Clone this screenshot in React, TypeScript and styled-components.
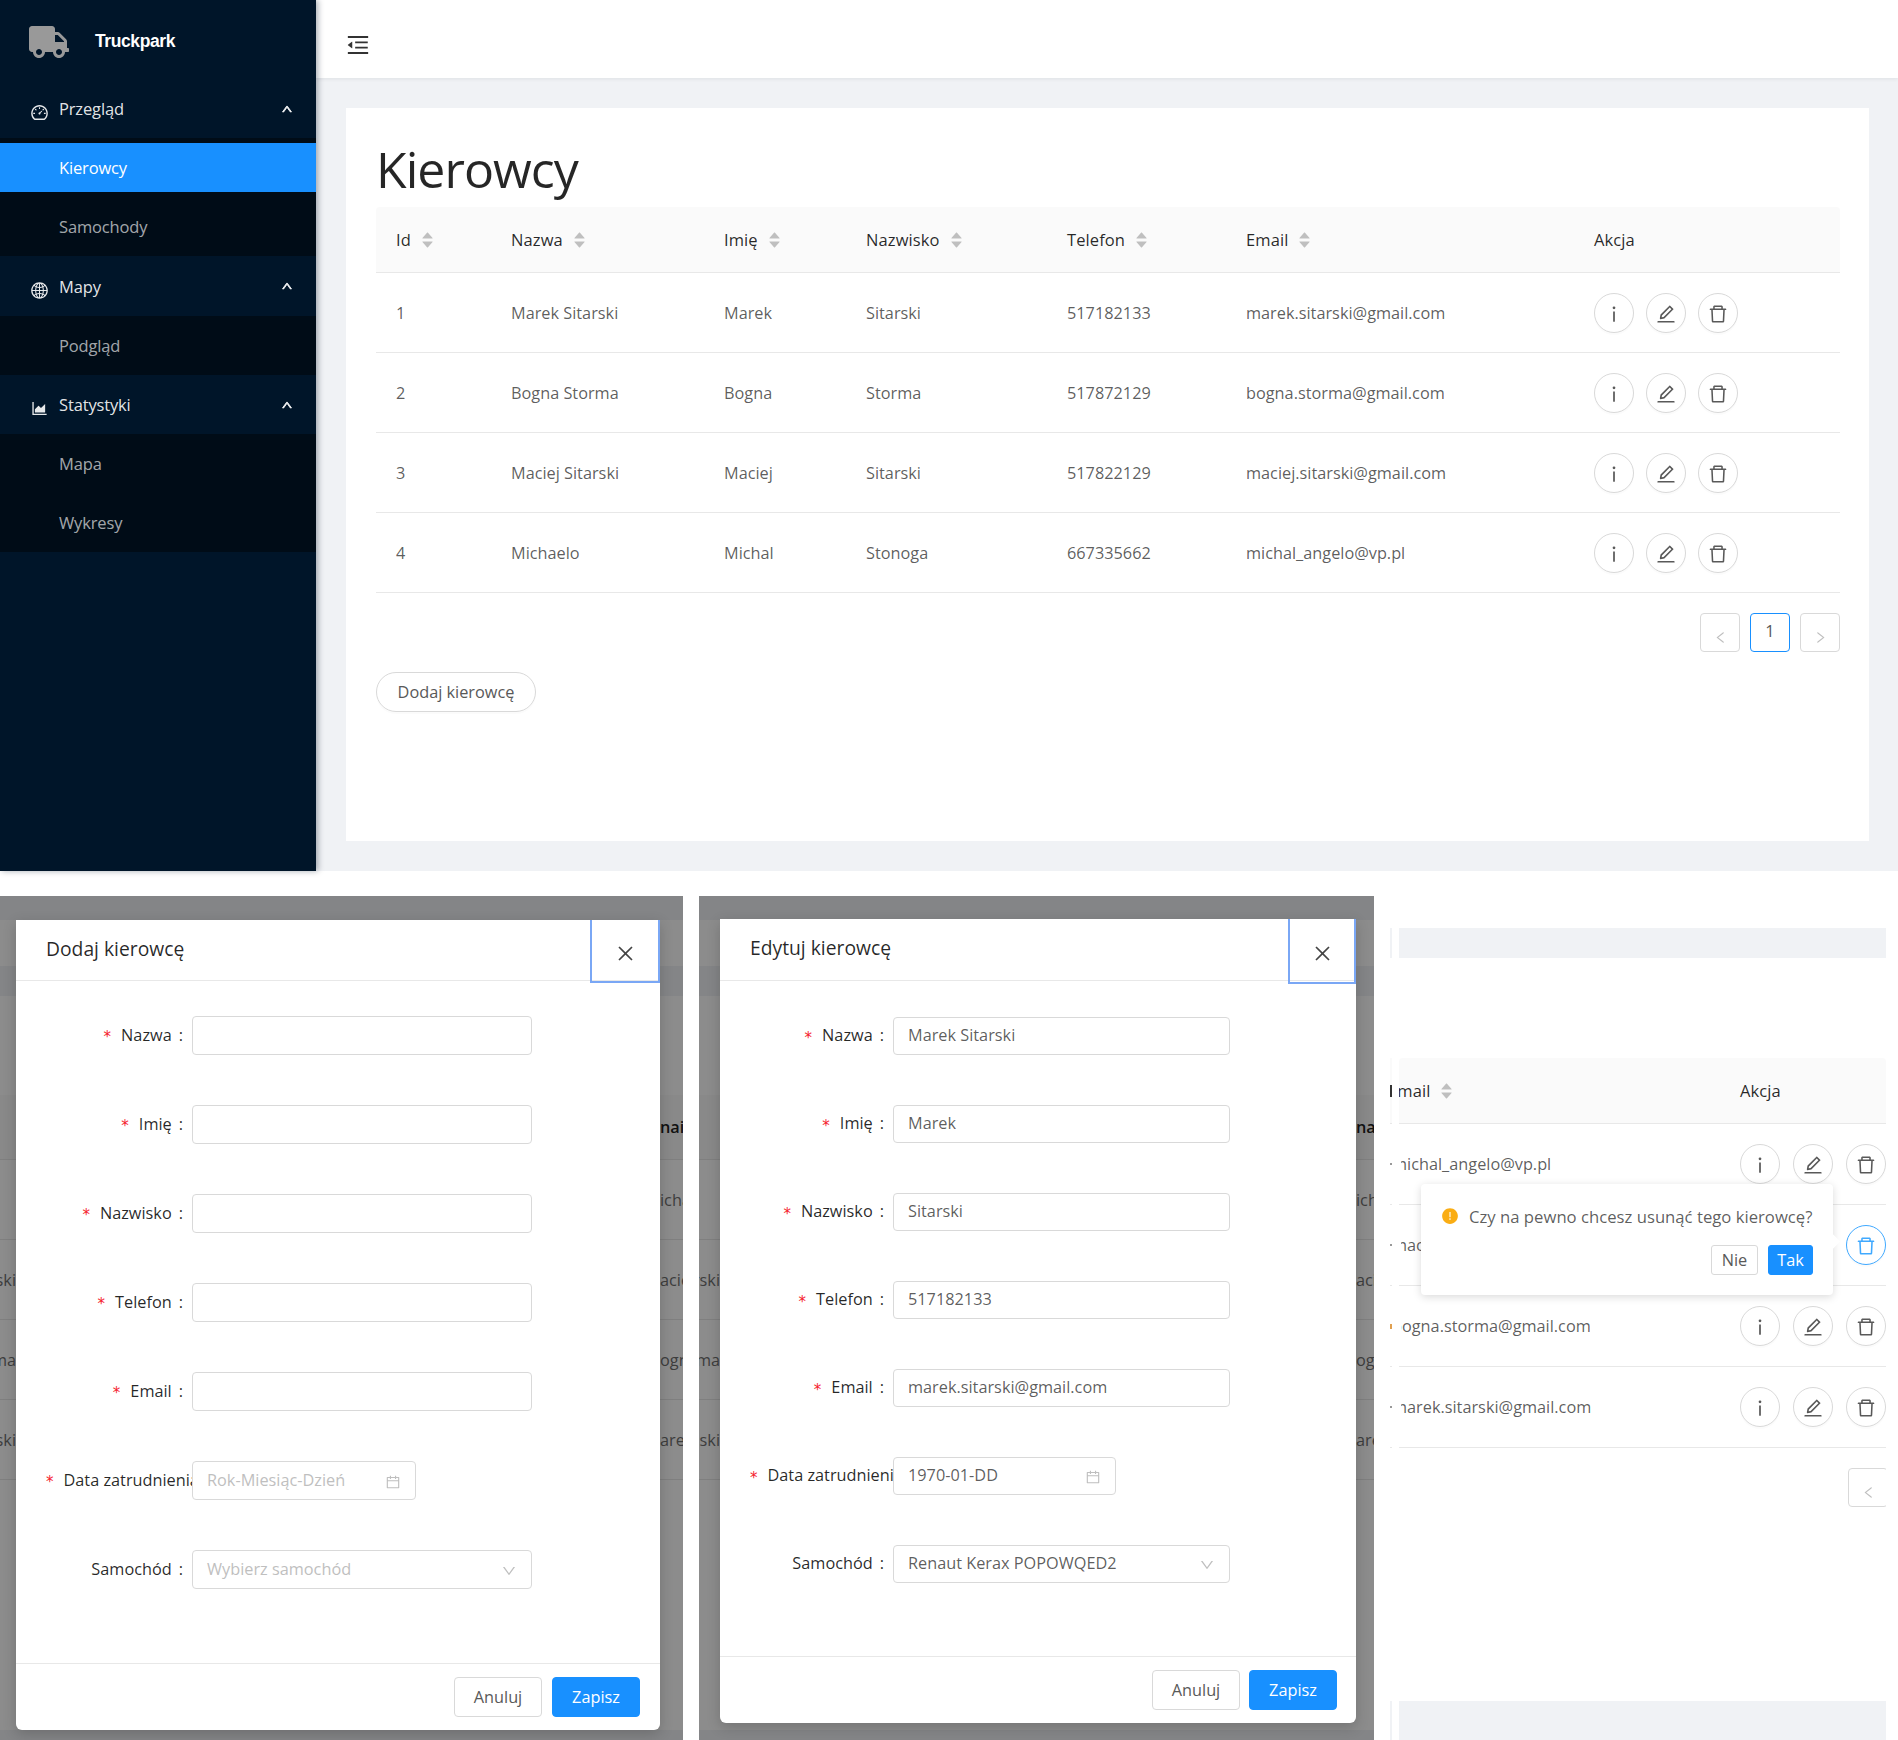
import React from 'react';
import styled, { createGlobalStyle } from 'styled-components';
import { FaTruck } from 'react-icons/fa';
import {
  AiFillCaretDown,
  AiFillCaretUp,
  AiFillExclamationCircle,
  AiOutlineAreaChart,
  AiOutlineCalendar,
  AiOutlineClose,
  AiOutlineDashboard,
  AiOutlineDelete,
  AiOutlineDown,
  AiOutlineEdit,
  AiOutlineGlobal,
  AiOutlineInfo,
  AiOutlineLeft,
  AiOutlineMenuFold,
  AiOutlineRight,
  AiOutlineUp,
} from 'react-icons/ai';

const FONT = '"Open Sans", "Noto Sans", sans-serif';

const GlobalStyle = createGlobalStyle`
  html, body {
    margin: 0;
    padding: 0;
    background: #fff;
    font-family: ${FONT};
  }
  * {
    box-sizing: border-box;
  }
`;

const Page = styled.div`
  width: 1898px;
  height: 1740px;
  display: flex;
  flex-direction: column;
  gap: 25px;
  overflow: hidden;
  background: #fff;
  font-size: 16.3px;
  color: rgba(0, 0, 0, 0.65);
`;

/* ---------- dashboard ---------- */

const Dashboard = styled.div`
  height: 871px;
  display: flex;
`;

const Sidebar = styled.aside`
  width: 316px;
  background: #001529;
  color: #fff;
  box-shadow: 2px 0 6px rgba(0, 21, 41, 0.35);
  position: relative;
`;

const Logo = styled.div`
  height: 79px;
  display: flex;
  align-items: center;
  padding: 4px 0 0 29px;
  gap: 26px;
  font-family: "Liberation Sans", sans-serif;
  font-size: 17.5px;
  font-weight: 700;
  letter-spacing: -0.4px;
  svg {
    width: 40px;
    height: 34px;
    color: #999;
  }
`;

const MenuHead = styled.div<{ $h: number }>`
  height: ${(p) => p.$h}px;
  display: flex;
  align-items: center;
  padding: 0 23px 0 30px;
  font-size: 16.5px;
  letter-spacing: -0.15px;
  color: rgba(255, 255, 255, 0.9);
`;

const MenuIcon = styled.span`
  width: 29px;
  display: flex;
  margin-top: 8px;
  svg {
    width: 19px;
    height: 19px;
  }
`;

const MenuChevron = styled.span`
  margin-left: auto;
  display: flex;
  svg {
    width: 12px;
    height: 12px;
    stroke: currentColor;
    stroke-width: 80;
  }
`;

const SubMenu = styled.div`
  background: #000c17;
  padding: 5px 0;
  display: flex;
  flex-direction: column;
  gap: 10px;
`;

const SubItem = styled.div<{ $active?: boolean }>`
  height: 49px;
  display: flex;
  align-items: center;
  padding-left: 59px;
  font-size: 16.5px;
  letter-spacing: -0.15px;
  background: ${(p) => (p.$active ? '#1890ff' : 'transparent')};
  color: ${(p) => (p.$active ? '#fff' : 'rgba(255, 255, 255, 0.65)')};
`;

const Main = styled.div`
  flex: 1;
  display: flex;
  flex-direction: column;
  background: #f0f2f5;
`;

const TopBar = styled.header`
  height: 78px;
  background: #fff;
  display: flex;
  align-items: center;
  padding: 12px 0 0 29px;
  box-shadow: 0 1px 4px rgba(0, 21, 41, 0.08);
  svg {
    width: 26px;
    height: 26px;
    color: #333;
  }
`;

const Card = styled.section`
  margin: 30px 29px 30px 30px;
  flex: 1;
  background: #fff;
  padding: 30px 29px 0 30px;
`;

const Title = styled.h1`
  margin: 0;
  height: 69px;
  font-size: 50px;
  line-height: 63px;
  font-weight: 400;
  letter-spacing: -0.95px;
  color: rgba(0, 0, 0, 0.85);
`;

const MAIN_COLUMNS = '115px 213px 142px 201px 179px 348px 266px';
const CLIPPED_COLUMNS = '341px 146px';

const HeadRow = styled.div<{ $columns: string; $h: number }>`
  height: ${(p) => p.$h}px;
  display: grid;
  grid-template-columns: ${(p) => p.$columns};
  align-items: center;
  background: #fafafa;
  border-bottom: 1px solid #e8e8e8;
  border-radius: 4px 4px 0 0;
  font-weight: 500;
  font-size: 16.5px;
  letter-spacing: 0.1px;
  color: rgba(0, 0, 0, 0.85);
`;

const BodyRow = styled.div<{ $columns: string; $h: number }>`
  height: ${(p) => p.$h}px;
  display: grid;
  grid-template-columns: ${(p) => p.$columns};
  align-items: center;
  border-bottom: 1px solid #e8e8e8;
`;

const Cell = styled.div`
  padding-left: 20px;
  white-space: nowrap;
  overflow: hidden;
`;

const HeadCell = styled.div<{ $flush?: boolean }>`
  padding-left: ${(p) => (p.$flush ? 0 : 20)}px;
  display: flex;
  align-items: center;
  gap: 9px;
`;

const ClippedCell = styled.div`
  overflow: hidden;
  white-space: nowrap;
  text-indent: -7px;
  clip-path: inset(0 0 0 2px);
`;

const ClippedHead = styled(HeadCell)`
  margin-left: -11px;
  clip-path: inset(0 0 0 11px);
`;

const SortWrap = styled.span`
  display: inline-flex;
  flex-direction: column;
  color: #bfbfbf;
  svg {
    width: 15px;
    height: 15px;
    margin: -3px 0;
    display: block;
  }
`;

const Sort = () => (
  <SortWrap>
    <AiFillCaretUp />
    <AiFillCaretDown />
  </SortWrap>
);

const ActionGroup = styled.div<{ $flush?: boolean; $gap: number }>`
  padding-left: ${(p) => (p.$flush ? 0 : 20)}px;
  display: flex;
  gap: ${(p) => p.$gap}px;
`;

const CircleButton = styled.span<{ $active?: boolean }>`
  width: 40px;
  height: 40px;
  border-radius: 50%;
  border: 1px solid ${(p) => (p.$active ? '#40a9ff' : '#d9d9d9')};
  color: ${(p) => (p.$active ? '#40a9ff' : '#595959')};
  background: #fff;
  box-shadow: 0 2px 0 rgba(0, 0, 0, 0.015);
  display: flex;
  align-items: center;
  justify-content: center;
  flex: none;
  svg {
    width: 22px;
    height: 22px;
    margin-top: 2px;
  }
`;

const Actions = ({ active, flush }: { active?: boolean; flush?: boolean }) => (
  <ActionGroup $flush={flush} $gap={flush ? 13 : 12}>
    <CircleButton>
      <AiOutlineInfo />
    </CircleButton>
    <CircleButton>
      <AiOutlineEdit />
    </CircleButton>
    <CircleButton $active={active}>
      <AiOutlineDelete />
    </CircleButton>
  </ActionGroup>
);

const Pager = styled.div<{ $flush?: boolean }>`
  display: flex;
  justify-content: flex-end;
  gap: 10px;
  padding-top: 20px;
  margin-right: ${(p) => (p.$flush ? '-2px' : '0')};
`;

const PageButton = styled.span<{ $active?: boolean }>`
  width: 40px;
  height: 39px;
  border: 1px solid ${(p) => (p.$active ? '#1890ff' : '#d9d9d9')};
  border-radius: 4px;
  display: flex;
  align-items: center;
  justify-content: center;
  padding-bottom: 3px;
  color: ${(p) => (p.$active ? '#595959' : '#bfbfbf')};
  font-size: 16.3px;
  svg {
    width: 15px;
    height: 15px;
    margin-top: 12px;
  }
`;

const AddButton = styled.span`
  margin-top: 20px;
  width: 160px;
  height: 40px;
  border: 1px solid #d9d9d9;
  border-radius: 20px;
  display: flex;
  align-items: center;
  justify-content: center;
  font-size: 16.3px;
  color: #595959;
  box-shadow: 0 2px 0 rgba(0, 0, 0, 0.015);
`;

const drivers = [
  { id: 1, name: 'Marek Sitarski', first: 'Marek', last: 'Sitarski', phone: '517182133', email: 'marek.sitarski@gmail.com' },
  { id: 2, name: 'Bogna Storma', first: 'Bogna', last: 'Storma', phone: '517872129', email: 'bogna.storma@gmail.com' },
  { id: 3, name: 'Maciej Sitarski', first: 'Maciej', last: 'Sitarski', phone: '517822129', email: 'maciej.sitarski@gmail.com' },
  { id: 4, name: 'Michaelo', first: 'Michal', last: 'Stonoga', phone: '667335662', email: 'michal_angelo@vp.pl' },
];

const sortable = ['Id', 'Nazwa', 'Imię', 'Nazwisko', 'Telefon', 'Email'];

/* ---------- dimmed page behind a dialog ---------- */

const Backdrop = styled.div<{ $w: number }>`
  position: relative;
  width: ${(p) => p.$w}px;
  flex: none;
  display: flex;
  flex-direction: column;
  overflow: hidden;
  background: #8c8c8c;
  font-size: 16.3px;
  color: #3d3d3d;
`;

const BackBand = styled.div<{ $h: number }>`
  height: ${(p) => p.$h}px;
  flex: none;
  background: #848587;
`;

const BackGap = styled.div<{ $h: number }>`
  height: ${(p) => p.$h}px;
  flex: none;
`;

const BackRow = styled.div<{ $head?: boolean }>`
  height: ${(p) => (p.$head ? 65 : 80)}px;
  flex: none;
  display: flex;
  justify-content: space-between;
  align-items: center;
  border-bottom: 1px solid #7f7f7f;
  background: ${(p) => (p.$head ? '#898989' : 'transparent')};
  color: ${(p) => (p.$head ? '#111' : '#3d3d3d')};
  font-weight: ${(p) => (p.$head ? 600 : 400)};
`;

const Fragment = styled.span<{ $w: number; $right?: boolean }>`
  width: ${(p) => p.$w}px;
  overflow: hidden;
  white-space: nowrap;
  display: flex;
  justify-content: ${(p) => (p.$right ? 'flex-start' : 'flex-end')};
`;

const Dialog = styled.div<{ $left: number; $top: number; $w: number; $h: number }>`
  position: absolute;
  left: ${(p) => p.$left}px;
  top: ${(p) => p.$top}px;
  width: ${(p) => p.$w}px;
  height: ${(p) => p.$h}px;
  background: #fff;
  border-radius: 0 0 6px 6px;
  box-shadow: 0 4px 14px rgba(0, 0, 0, 0.18);
  display: flex;
  flex-direction: column;
`;

const DialogHead = styled.div<{ $h: number }>`
  position: relative;
  height: ${(p) => p.$h}px;
  flex: none;
  display: flex;
  align-items: center;
  padding: 0 30px 4px;
  border-bottom: 1px solid #e8e8e8;
  font-size: 19.3px;
  font-weight: 500;
  color: rgba(0, 0, 0, 0.85);
`;

const CloseBox = styled.span<{ $w: number; $h: number }>`
  position: absolute;
  top: 0;
  right: 0;
  width: ${(p) => p.$w}px;
  height: ${(p) => p.$h}px;
  border: 2px solid #7aa7f5;
  border-top: none;
  display: flex;
  align-items: center;
  justify-content: center;
  color: #444;
  padding-top: 6px;
  svg {
    width: 21px;
    height: 21px;
  }
`;

const Form = styled.div<{ $pad: number }>`
  flex: 1;
  padding-top: ${(p) => p.$pad}px;
  display: flex;
  flex-direction: column;
  gap: 50px;
`;

const FormRow = styled.div<{ $h: number; $label: number }>`
  height: ${(p) => p.$h}px;
  display: grid;
  grid-template-columns: ${(p) => p.$label}px 1fr;
  align-items: center;
`;

const Label = styled.label<{ $long?: boolean; $pad: number }>`
  display: flex;
  align-items: center;
  justify-content: ${(p) => (p.$long ? 'flex-start' : 'flex-end')};
  padding-left: ${(p) => (p.$long ? p.$pad : 0)}px;
  padding-right: ${(p) => (p.$long ? 0 : 9)}px;
  padding-bottom: 2px;
  white-space: nowrap;
  overflow: hidden;
  color: rgba(0, 0, 0, 0.85);
  font-size: 16.3px;
`;

const Star = styled.span`
  color: #f5222d;
  margin-right: 10px;
  font-family: "DejaVu Sans", sans-serif;
  font-size: 15px;
  line-height: 1;
  transform: translateY(3px);
`;

const Colon = styled.span`
  margin-left: 7px;
`;

const Control = styled.div<{ $w: number; $h: number; $muted?: boolean }>`
  width: ${(p) => p.$w}px;
  height: ${(p) => p.$h}px;
  border: 1px solid #d9d9d9;
  border-radius: 4px;
  background: #fff;
  display: flex;
  align-items: center;
  padding: 0 14px 2px;
  font-size: 16.3px;
  color: ${(p) => (p.$muted ? '#bfbfbf' : 'rgba(0, 0, 0, 0.65)')};
  svg {
    margin-left: auto;
    width: 16px;
    height: 16px;
    margin-top: 4px;
    color: #bfbfbf;
    flex: none;
  }
`;

const DialogFoot = styled.div<{ $pad: number; $gap: number }>`
  flex: none;
  height: 67px;
  border-top: 1px solid #e8e8e8;
  display: flex;
  justify-content: flex-end;
  align-items: center;
  gap: ${(p) => p.$gap}px;
  padding-right: ${(p) => p.$pad}px;
`;

const FootButton = styled.span<{ $primary?: boolean }>`
  width: 88px;
  height: 40px;
  border-radius: 4px;
  border: 1px solid ${(p) => (p.$primary ? '#1890ff' : '#d9d9d9')};
  background: ${(p) => (p.$primary ? '#1890ff' : '#fff')};
  color: ${(p) => (p.$primary ? '#fff' : '#595959')};
  display: flex;
  align-items: center;
  justify-content: center;
  font-size: 16.3px;
`;

type Geometry = {
  left: number;
  top: number;
  w: number;
  h: number;
  head: number;
  closeW: number;
  closeH: number;
  pad: number;
  row: number;
  label: number;
  control: number;
  date: number;
  longPad: number;
  footPad: number;
  footGap: number;
};

const fields = ['Nazwa', 'Imię', 'Nazwisko', 'Telefon', 'Email'];

const DriverDialog = ({
  title,
  geo,
  values,
  date,
  car,
}: {
  title: string;
  geo: Geometry;
  values: string[];
  date: string;
  car: string;
}) => (
  <Dialog $left={geo.left} $top={geo.top} $w={geo.w} $h={geo.h}>
    <DialogHead $h={geo.head}>
      {title}
      <CloseBox $w={geo.closeW} $h={geo.closeH}>
        <AiOutlineClose />
      </CloseBox>
    </DialogHead>
    <Form $pad={geo.pad}>
      {fields.map((field, i) => (
        <FormRow key={field} $h={geo.row} $label={geo.label}>
          <Label $pad={0}>
            <Star>*</Star>
            {field}
            <Colon>:</Colon>
          </Label>
          <Control $w={geo.control} $h={geo.row}>
            {values[i]}
          </Control>
        </FormRow>
      ))}
      <FormRow $h={geo.row} $label={geo.label}>
        <Label $long $pad={geo.longPad}>
          <Star>*</Star>
          Data zatrudnienia
          <Colon>:</Colon>
        </Label>
        <Control $w={geo.date} $h={geo.row} $muted={date.startsWith('Rok')}>
          {date}
          <AiOutlineCalendar />
        </Control>
      </FormRow>
      <FormRow $h={geo.row} $label={geo.label}>
        <Label $pad={0}>
          Samochód
          <Colon>:</Colon>
        </Label>
        <Control $w={geo.control} $h={geo.row} $muted={car.startsWith('Wybierz')}>
          {car}
          <AiOutlineDown />
        </Control>
      </FormRow>
    </Form>
    <DialogFoot $pad={geo.footPad} $gap={geo.footGap}>
      <FootButton>Anuluj</FootButton>
      <FootButton $primary>Zapisz</FootButton>
    </DialogFoot>
  </Dialog>
);

const DimmedPage = ({
  w,
  leftW,
  rightW,
  left,
  right,
  children,
}: {
  w: number;
  leftW: number;
  rightW: number;
  left: string[];
  right: string[];
  children: React.ReactNode;
}) => (
  <Backdrop $w={w}>
    <BackBand $h={24} />
    <BackGap $h={46} />
    <BackBand $h={30} />
    <BackGap $h={99} />
    {right.map((text, i) => (
      <BackRow key={text} $head={i === 0}>
        <Fragment $w={leftW}>{left[i]}</Fragment>
        <Fragment $w={rightW} $right>
          {text}
        </Fragment>
      </BackRow>
    ))}
    <BackGap $h={250} />
    <BackBand $h={10} />
    {children}
  </Backdrop>
);

/* ---------- delete confirmation crop ---------- */

const ConfirmPanel = styled.div`
  display: flex;
  padding-top: 32px;
  gap: 7px;
`;

const Sliver = styled.div`
  width: 2px;
  display: flex;
  flex-direction: column;
`;

const SliverPart = styled.div<{ $h: number; $bg?: string; $line?: boolean }>`
  height: ${(p) => p.$h}px;
  flex: none;
  display: flex;
  align-items: center;
  background: ${(p) => p.$bg || 'transparent'};
  border-bottom: ${(p) => (p.$line ? '1px solid #e8e8e8' : 'none')};
`;

const SliverMark = styled.span<{ $h: number; $color: string }>`
  width: 2px;
  height: ${(p) => p.$h}px;
  background: ${(p) => p.$color};
`;

const CropColumn = styled.div`
  position: relative;
  width: 487px;
  overflow: hidden;
  display: flex;
  flex-direction: column;
`;

const GreyBand = styled.div<{ $h: number; $top?: boolean }>`
  height: ${(p) => p.$h}px;
  flex: none;
  background: #f0f2f5;
  margin-top: ${(p) => (p.$top ? 'auto' : 0)};
`;

const Popover = styled.div`
  position: absolute;
  left: 22px;
  top: 256px;
  width: 412px;
  height: 111px;
  background: #fff;
  border-radius: 4px;
  box-shadow: 0 2px 8px rgba(0, 0, 0, 0.15);
  padding: 18px 20px 0;
  z-index: 2;
  &::after {
    content: '';
    position: absolute;
    right: -5px;
    top: 52px;
    width: 11px;
    height: 11px;
    background: #fff;
    transform: rotate(45deg);
  }
`;

const PopoverText = styled.div`
  display: flex;
  align-items: center;
  gap: 10px;
  height: 28px;
  font-size: 16.7px;
  white-space: nowrap;
  svg {
    width: 18px;
    height: 18px;
    color: #faad14;
    flex: none;
  }
`;

const PopoverButtons = styled.div`
  display: flex;
  justify-content: flex-end;
  gap: 10px;
  margin-top: 15px;
`;

const SmallButton = styled.span<{ $primary?: boolean }>`
  height: 30px;
  width: ${(p) => (p.$primary ? 45 : 47)}px;
  border-radius: 3px;
  border: 1px solid ${(p) => (p.$primary ? '#1890ff' : '#d9d9d9')};
  background: ${(p) => (p.$primary ? '#1890ff' : '#fff')};
  color: ${(p) => (p.$primary ? '#fff' : '#595959')};
  display: flex;
  align-items: center;
  justify-content: center;
  font-size: 16.3px;
`;

const BottomRow = styled.div`
  flex: 1;
  display: flex;
  gap: 16px;
`;

const addGeo: Geometry = {
  left: 16, top: 24, w: 644, h: 810, head: 61, closeW: 70, closeH: 63, pad: 35, row: 39, label: 176, control: 340, date: 224, longPad: 30, footPad: 20, footGap: 10,
};

const editGeo: Geometry = {
  left: 21, top: 23, w: 636, h: 804, head: 62, closeW: 68, closeH: 65, pad: 36, row: 38, label: 173, control: 337, date: 223, longPad: 30, footPad: 19, footGap: 9,
};

const App: React.FC = () => {
  const reversed = [...drivers].reverse();
  return (
    <Page>
      <GlobalStyle />
      <Dashboard>
        <Sidebar>
          <Logo>
            <FaTruck />
            Truckpark
          </Logo>
          <MenuHead $h={59}>
            <MenuIcon>
              <AiOutlineDashboard />
            </MenuIcon>
            Przegląd
            <MenuChevron>
              <AiOutlineUp />
            </MenuChevron>
          </MenuHead>
          <SubMenu>
            <SubItem $active>Kierowcy</SubItem>
            <SubItem>Samochody</SubItem>
          </SubMenu>
          <MenuHead $h={60}>
            <MenuIcon>
              <AiOutlineGlobal />
            </MenuIcon>
            Mapy
            <MenuChevron>
              <AiOutlineUp />
            </MenuChevron>
          </MenuHead>
          <SubMenu>
            <SubItem>Podgląd</SubItem>
          </SubMenu>
          <MenuHead $h={59}>
            <MenuIcon>
              <AiOutlineAreaChart />
            </MenuIcon>
            Statystyki
            <MenuChevron>
              <AiOutlineUp />
            </MenuChevron>
          </MenuHead>
          <SubMenu>
            <SubItem>Mapa</SubItem>
            <SubItem>Wykresy</SubItem>
          </SubMenu>
        </Sidebar>
        <Main>
          <TopBar>
            <AiOutlineMenuFold />
          </TopBar>
          <Card>
            <Title>Kierowcy</Title>
            <HeadRow $columns={MAIN_COLUMNS} $h={66}>
              {sortable.map((col) => (
                <HeadCell key={col}>
                  {col}
                  <Sort />
                </HeadCell>
              ))}
              <HeadCell>Akcja</HeadCell>
            </HeadRow>
            {drivers.map((d) => (
              <BodyRow key={d.id} $columns={MAIN_COLUMNS} $h={80}>
                <Cell>{d.id}</Cell>
                <Cell>{d.name}</Cell>
                <Cell>{d.first}</Cell>
                <Cell>{d.last}</Cell>
                <Cell>{d.phone}</Cell>
                <Cell>{d.email}</Cell>
                <Actions />
              </BodyRow>
            ))}
            <Pager>
              <PageButton>
                <AiOutlineLeft />
              </PageButton>
              <PageButton $active>1</PageButton>
              <PageButton>
                <AiOutlineRight />
              </PageButton>
            </Pager>
            <AddButton>Dodaj kierowcę</AddButton>
          </Card>
        </Main>
      </Dashboard>

      <BottomRow>
        <DimmedPage
          w={683}
          leftW={16}
          rightW={23}
          left={['', '', 'ski', 'ma', 'ski']}
          right={['nail', 'icha', 'acie', 'ogn', 'are']}
        >
          <DriverDialog
            title="Dodaj kierowcę"
            geo={addGeo}
            values={['', '', '', '', '']}
            date="Rok-Miesiąc-Dzień"
            car="Wybierz samochód"
          />
        </DimmedPage>
        <DimmedPage
          w={675}
          leftW={21}
          rightW={18}
          left={['', '', 'rski', 'ma', 'ski']}
          right={['na', 'ich', 'aci', 'ogr', 'are']}
        >
          <DriverDialog
            title="Edytuj kierowcę"
            geo={editGeo}
            values={['Marek Sitarski', 'Marek', 'Sitarski', '517182133', 'marek.sitarski@gmail.com']}
            date="1970-01-DD"
            car="Renaut Kerax POPOWQED2"
          />
        </DimmedPage>

        <ConfirmPanel>
          <Sliver>
            <SliverPart $h={30} $bg="#f0f2f5" />
            <SliverPart $h={100} />
            <SliverPart $h={66} $bg="#fafafa" $line>
              <SliverMark $h={12} $color="#333" />
            </SliverPart>
            <SliverPart $h={81} $line>
              <SliverMark $h={2} $color="#999" />
            </SliverPart>
            <SliverPart $h={81} $line>
              <SliverMark $h={2} $color="#999" />
            </SliverPart>
            <SliverPart $h={81} $line>
              <SliverMark $h={5} $color="#e0a050" />
            </SliverPart>
            <SliverPart $h={81} $line>
              <SliverMark $h={2} $color="#999" />
            </SliverPart>
            <SliverPart $h={253} />
            <SliverPart $h={39} $bg="#f0f2f5" />
          </Sliver>
          <CropColumn>
            <GreyBand $h={30} />
            <BackGap $h={100} />
            <HeadRow $columns={CLIPPED_COLUMNS} $h={66}>
              <ClippedHead $flush>
                Email
                <Sort />
              </ClippedHead>
              <HeadCell $flush>Akcja</HeadCell>
            </HeadRow>
            {reversed.map((d, i) => (
              <BodyRow key={d.id} $columns={CLIPPED_COLUMNS} $h={81}>
                <ClippedCell>{d.email}</ClippedCell>
                <Actions active={i === 1} flush />
              </BodyRow>
            ))}
            <Pager $flush>
              <PageButton>
                <AiOutlineLeft />
              </PageButton>
            </Pager>
            <GreyBand $h={39} $top />
            <Popover>
              <PopoverText>
                <AiFillExclamationCircle />
                Czy na pewno chcesz usunąć tego kierowcę?
              </PopoverText>
              <PopoverButtons>
                <SmallButton>Nie</SmallButton>
                <SmallButton $primary>Tak</SmallButton>
              </PopoverButtons>
            </Popover>
          </CropColumn>
        </ConfirmPanel>
      </BottomRow>
    </Page>
  );
};

export default App;
